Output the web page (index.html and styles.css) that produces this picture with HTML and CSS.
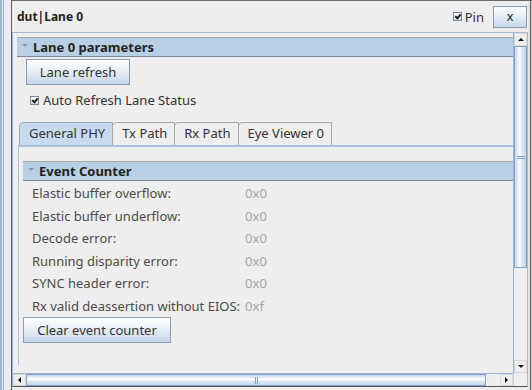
FILE: index.html
```html
<!DOCTYPE html>
<html lang="en">
<head>
    <meta charset="UTF-8">
    <meta name="viewport" content="width=device-width, initial-scale=1.0">
    <title>dut|Lane 0</title>
    <link rel="stylesheet" href="styles.css">
</head>
<body>
    <div class="window">
        <div class="side"></div>

        <div class="main">
            <div class="titlebar">
                <span class="title">dut|Lane 0</span>
                <label class="pin">
                    <span class="check checked"></span>Pin
                </label>
                <button class="close">x</button>
            </div>

            <div class="scrollpane">
                <div class="pane-row">
                    <div class="viewport">
                        <div class="content">
                            <div class="section-head"><span class="tri"></span>Lane 0 parameters</div>
                            <button class="btn lane-refresh">Lane refresh</button>
                            <label class="check-row">
                                <span class="check checked"></span>Auto Refresh Lane Status
                            </label>

                            <div class="tabs">
                                <div class="tab active">General PHY</div>
                                <div class="tab">Tx Path</div>
                                <div class="tab">Rx Path</div>
                                <div class="tab">Eye Viewer 0</div>
                            </div>
                            <div class="tab-body">
                                <div class="section-head"><span class="tri"></span>Event Counter</div>
                                <div class="counters">
                                    <span class="lbl">Elastic buffer overflow:</span><span class="val">0x0</span>
                                    <span class="lbl">Elastic buffer underflow:</span><span class="val">0x0</span>
                                    <span class="lbl">Decode error:</span><span class="val">0x0</span>
                                    <span class="lbl">Running disparity error:</span><span class="val">0x0</span>
                                    <span class="lbl">SYNC header error:</span><span class="val">0x0</span>
                                    <span class="lbl">Rx valid deassertion without EIOS:</span><span class="val">0xf</span>
                                </div>
                                <button class="btn clear-btn">Clear event counter</button>
                            </div>
                        </div>
                    </div>

                    <div class="vscroll">
                        <div class="arrow-btn"><span class="arr up"></span></div>
                        <div class="vthumb"><span class="grip-h"></span></div>
                        <div class="track"></div>
                        <div class="arrow-btn"><span class="arr down"></span></div>
                    </div>
                </div>

                <div class="hscroll-row">
                    <div class="hscroll">
                        <div class="arrow-btn"><span class="arr left"></span></div>
                        <div class="hthumb"><span class="grip-v"></span></div>
                        <div class="track"></div>
                        <div class="arrow-btn"><span class="arr right"></span></div>
                    </div>
                    <div class="corner"></div>
                </div>
            </div>
        </div>

        <div class="edge"></div>
    </div>
</body>
</html>
```

FILE: styles.css
```css
* {
    box-sizing: border-box;
}

body {
    margin: 0;
    width: 532px;
    height: 390px;
    overflow: hidden;
    background: #eeeeee;
    font-family: "Noto Sans", "Open Sans", sans-serif;
    font-size: 13px;
    color: #333;
}

.window {
    display: flex;
    height: 390px;
}

.side {
    width: 12px;
    border-right: 1px solid #5c5c5c;
    background: linear-gradient(to right, #a3b6cf 0 2px, #dfe6ef 2px 3px, #9cb2cd 3px 4px, #e9edf2 4px);
}

.main {
    width: 516px;
    display: flex;
    flex-direction: column;
    border-top: 1px solid #6a6a6a;
}

.edge {
    width: 4px;
    border-top: 1px solid #6a6a6a;
    background: linear-gradient(to right, #e4e4e4 0 2px, #5c5c5c 2px 3px, #cfcfcf 3px);
}

/* title bar */
.titlebar {
    height: 31px;
    display: flex;
    align-items: center;
    padding: 0 1px 0 5px;
}

.title {
    font-size: 12px;
    font-weight: bold;
    color: #222;
}

.pin {
    margin-left: auto;
    display: flex;
    align-items: center;
    gap: 3px;
    font-size: 13px;
    color: #333;
}

.close {
    margin-left: 9px;
    width: 34px;
    height: 22px;
    border: 1px solid #8b9bb0;
    background: linear-gradient(#ffffff, #e6eef7 45%, #c6d7ea);
    font-family: "DejaVu Sans", sans-serif;
    font-size: 12px;
    color: #222;
    padding: 0;
}

.check {
    display: inline-block;
    width: 9px;
    height: 9px;
    border: 1px solid #7a8a99;
    background: linear-gradient(#ffffff, #c9d9ec);
    position: relative;
}

.check.checked::after {
    content: "";
    position: absolute;
    left: 2px;
    top: 0px;
    width: 2px;
    height: 4px;
    border: solid #222;
    border-width: 0 2px 2px 0;
    transform: rotate(40deg);
}

/* scroll pane */
.scrollpane {
    height: 355px;
    display: flex;
    flex-direction: column;
    border-top: 1px solid #a9b9cf;
    border-left: 1px solid #9fb6d4;
    border-right: 1px solid #b8b8b8;
    border-bottom: 1px solid #555;
}

.pane-row {
    display: flex;
    height: 340px;
}

.viewport {
    width: 500px;
    height: 340px;
    overflow: hidden;
}

.content {
    width: 519px;
    padding: 4px;
}

.section-head {
    height: 20px;
    display: flex;
    align-items: center;
    padding-left: 5px;
    gap: 5px;
    background: #b8cfe5;
    border-top: 1px solid #a6a6a6;
    border-bottom: 1px solid #7d8b98;
    font-weight: bold;
    color: #222;
}

.tri {
    width: 0;
    height: 0;
    border-left: 3px solid transparent;
    border-right: 3px solid transparent;
    border-top: 3px solid #8c96a2;
    margin-bottom: 4px;
}

.btn {
    display: block;
    height: 26px;
    border: 1px solid #8b9bb0;
    background: linear-gradient(#ffffff, #e8eff7 45%, #c4d6ea);
    font-family: inherit;
    font-size: 13px;
    color: #333;
    padding: 0;
}

.lane-refresh {
    width: 104px;
    margin: 2px 0 0 9px;
}

.check-row {
    display: flex;
    align-items: center;
    gap: 4px;
    height: 16px;
    margin: 7px 0 0 13px;
}

/* tabs */
.tabs {
    display: flex;
    margin: 14px 0 0 2px;
    height: 23px;
}

.tab {
    height: 23px;
    padding: 0 7px 0 9px;
    border: 1px solid #a8a8a8;
    border-bottom: none;
    border-top-left-radius: 5px;
    margin-right: -1px;
    line-height: 21px;
    background: #eeeeee;
}

.tab.active {
    background: #c8daef;
    border-color: #94a9c4;
}

.tab-body {
    margin-left: 1px;
    border-top: 2px solid #a9bfdd;
    border-left: 1px solid #a9bfdd;
    padding: 14px 0 0 4px;
    height: 220px;
}

.counters {
    display: grid;
    grid-template-columns: max-content auto;
    column-gap: 5px;
    padding: 1px 0 0 9px;
    line-height: 22.5px;
}

.lbl {
    color: #4b4b4b;
}

.val {
    color: #a5a5a5;
}

.clear-btn {
    width: 148px;
    margin-top: 0;
}

/* scroll bars */
.vscroll {
    width: 14px;
    display: flex;
    flex-direction: column;
    border-left: 1px solid #9db3d2;
}

.arrow-btn {
    width: 13px;
    height: 13px;
    background: #eeeeee;
    border: 1px solid #d8d8d8;
    display: flex;
    align-items: center;
    justify-content: center;
}

.arr {
    width: 0;
    height: 0;
}

.arr.up {
    border-left: 3px solid transparent;
    border-right: 3px solid transparent;
    border-bottom: 3px solid #111;
}

.arr.down {
    border-left: 3px solid transparent;
    border-right: 3px solid transparent;
    border-top: 3px solid #111;
}

.arr.left {
    border-top: 3px solid transparent;
    border-bottom: 3px solid transparent;
    border-right: 3px solid #111;
}

.arr.right {
    border-top: 3px solid transparent;
    border-bottom: 3px solid transparent;
    border-left: 3px solid #111;
}

.vthumb {
    height: 222px;
    border: 1px solid #7f9fcd;
    background: linear-gradient(to right, #c7d8ee, #ffffff 45%, #e3ecf7 60%, #bfd3ea);
    display: flex;
    align-items: center;
    justify-content: center;
}

.grip-h {
    width: 8px;
    height: 3px;
    border-top: 1px solid #7f9fcd;
    border-bottom: 1px solid #7f9fcd;
}

.track {
    flex: 1;
    background: #eeeeee;
}

.hscroll-row {
    display: flex;
    height: 13px;
}

.hscroll {
    width: 500px;
    display: flex;
    border-top: 1px solid #9db3d2;
}

.hscroll .arrow-btn {
    height: 12px;
}

.hthumb {
    width: 460px;
    border: 1px solid #7f9fcd;
    background: linear-gradient(#c7d8ee, #ffffff 45%, #e3ecf7 60%, #bfd3ea);
    display: flex;
    align-items: center;
    justify-content: center;
}

.grip-v {
    width: 3px;
    height: 7px;
    border-left: 1px solid #7f9fcd;
    border-right: 1px solid #7f9fcd;
}

.corner {
    width: 14px;
    background: #eeeeee;
    border-left: 1px solid #d0d0d0;
}
```
